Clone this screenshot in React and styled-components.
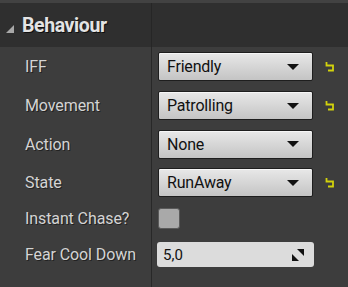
import React from 'react';
import styled, { createGlobalStyle } from 'styled-components';

const Global = createGlobalStyle`
  html, body { margin: 0; padding: 0; background: #3d3d3d; }
  body { font-family: Roboto, "Noto Sans", sans-serif; }
`;

const Panel = styled.div`
  width: 348px;
  height: 287px;
  background: #3d3d3d;
  border-top: 3px solid #424242;
  box-sizing: border-box;
  overflow: hidden;
`;

const Header = styled.div`
  height: 44px;
  background: #2f2f2f;
  display: grid;
  grid-template-columns: 151px 1px 1fr;
`;

const HeaderTitle = styled.div`
  display: flex;
  align-items: center;
  gap: 8px;
  padding-left: 6px;
  font-weight: 700;
  font-size: 19.5px;
  letter-spacing: -0.4px;
  color: #e4e4e4;
  text-shadow: 1px 1px 0 #0e0e0e;
`;

const Arrow = styled.span`
  width: 0;
  height: 0;
  margin-top: 8px;
  border-left: 8px solid transparent;
  border-bottom: 8px solid #a8a8a8;
`;

const Divider = styled.div`
  background: ${({ dark }) => (dark ? '#262626' : '#282828')};
`;

const Row = styled.div`
  height: ${({ h }) => h}px;
  display: grid;
  grid-template-columns: 151px 1px 1fr;
`;

const Label = styled.div`
  display: flex;
  align-items: center;
  padding-left: 25px;
  font-size: 16px;
  letter-spacing: -0.1px;
  color: #d4d4d4;
  text-shadow: 1px 1px 0 #222;
`;

const Value = styled.div`
  display: flex;
  align-items: center;
  padding-left: 6px;
  gap: 12px;
`;

const Combo = styled.div`
  width: 155px;
  height: 29px;
  box-sizing: border-box;
  border: 1px solid #1e1e1e;
  border-radius: 2px;
  background: linear-gradient(#e8e8e8, #c4c4c4);
  box-shadow: inset 0 1px 0 #f6f6f6;
  display: flex;
  align-items: center;
  justify-content: space-between;
  padding: 0 13px 0 8px;
  font-size: 16px;
  letter-spacing: -0.2px;
  color: #111;
`;

const Caret = styled.span`
  width: 0;
  height: 0;
  border-left: 6px solid transparent;
  border-right: 6px solid transparent;
  border-top: 6px solid #111;
`;

const Check = styled.div`
  width: 22px;
  height: 21px;
  box-sizing: border-box;
  border: 1px solid #5a5a5a;
  border-radius: 3px;
  background: #a9a9a9;
`;

const NumberBox = styled.div`
  width: 157px;
  height: 25px;
  margin-left: -1px;
  box-sizing: border-box;
  border-radius: 3px;
  background: #dcdcdc;
  display: flex;
  align-items: center;
  justify-content: space-between;
  padding: 0 10px 0 6px;
  font-size: 15px;
  color: #111;
`;

const Reset = () => (
  <svg width="11" height="11" viewBox="0 0 11 11">
    <path d="M1.5 1 V4.5 H8 V9.5 H3" fill="none" stroke="#d2d20c" strokeWidth="1.8" />
  </svg>
);

const Spin = () => (
  <svg width="12" height="12" viewBox="0 0 12 12">
    <polygon points="5,0 12,0 12,7" fill="#111" />
    <polygon points="0,5 0,12 7,12" fill="#111" />
  </svg>
);

const rows = [
  { label: 'IFF', value: 'Friendly', reset: true, h: 39 },
  { label: 'Movement', value: 'Patrolling', reset: true, h: 39 },
  { label: 'Action', value: 'None', reset: false, h: 38 },
  { label: 'State', value: 'RunAway', reset: true, h: 39 },
];

const App = () => (
  <>
    <Global />
    <Panel>
      <Header>
        <HeaderTitle>
          <Arrow />
          Behaviour
        </HeaderTitle>
        <Divider dark />
        <div />
      </Header>
      {rows.map((r) => (
        <Row key={r.label} h={r.h}>
          <Label>{r.label}</Label>
          <Divider />
          <Value>
            <Combo>
              {r.value}
              <Caret />
            </Combo>
            {r.reset && <Reset />}
          </Value>
        </Row>
      ))}
      <Row h={33}>
        <Label>Instant Chase?</Label>
        <Divider />
        <Value>
          <Check />
        </Value>
      </Row>
      <Row h={39}>
        <Label>Fear Cool Down</Label>
        <Divider />
        <Value>
          <NumberBox>
            5,0
            <Spin />
          </NumberBox>
        </Value>
      </Row>
      <Row h={20}>
        <div />
        <Divider />
        <div />
      </Row>
    </Panel>
  </>
);

export default App;
